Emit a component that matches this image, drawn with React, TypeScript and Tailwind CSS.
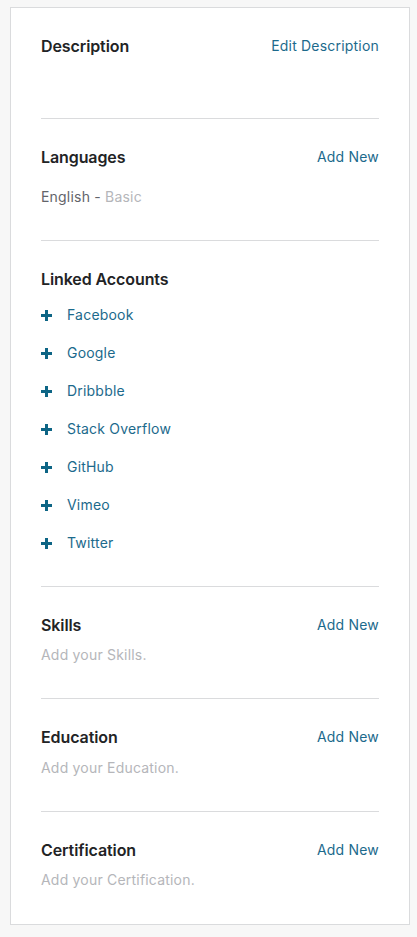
const font = { fontFamily: "Inter, 'Noto Sans', sans-serif" };

const accounts = ["Facebook", "Google", "Dribbble", "Stack Overflow", "GitHub", "Vimeo", "Twitter"];

function Header({ title, action }: { title: string; action: string }) {
  return (
    <div className="flex items-center justify-between h-[18px]">
      <h3 className="text-[16px] leading-[18px] font-semibold text-[#222325] tracking-[-0.1px]">{title}</h3>
      <a className="text-[14px] leading-[18px] text-[#1c6a8c] tracking-[0.2px]">{action}</a>
    </div>
  );
}

function Plus() {
  return (
    <svg width="11" height="11" viewBox="0 0 11 11" className="shrink-0">
      <rect x="4" y="0" width="3" height="11" fill="#0d6585" />
      <rect x="0" y="4" width="11" height="3" fill="#0d6585" />
    </svg>
  );
}

const extras = [
  { name: "Skills", cls: "pt-[29px] pb-[33px] border-b border-[#dadbdd]", text: "mt-[11px]" },
  { name: "Education", cls: "pt-[29px] pb-[33px] border-b border-[#dadbdd]", text: "mt-[12px]" },
  { name: "Certification", cls: "pt-[29px] pb-[34px]", text: "mt-[11px]" },
];

export default function App() {
  return (
    <div className="min-h-[937px] bg-[#f7f7f7] pt-[7px] px-[10px]" style={font}>
      <div className="bg-white border border-[#dadbdd] px-[30px] w-[400px]">
        <section className="pt-[29px] pb-[63px] border-b border-[#dadbdd]">
          <Header title="Description" action="Edit Description" />
        </section>

        <section className="pt-[29px] pb-[33px] border-b border-[#dadbdd]">
          <Header title="Languages" action="Add New" />
          <p className="mt-[21px] text-[14px] leading-[20px] text-[#62646a] tracking-[0.2px]">
            English - <span className="text-[#b5b6ba]">Basic</span>
          </p>
        </section>

        <section className="pt-[29px] pb-[33px] border-b border-[#dadbdd]">
          <h3 className="text-[16px] leading-[18px] font-semibold text-[#222325] tracking-[-0.1px]">Linked Accounts</h3>
          <ul className="mt-[17px] flex flex-col gap-[18px]">
            {accounts.map((a) => (
              <li key={a} className="flex items-center gap-[15px] h-[20px]">
                <Plus />
                <span className="text-[14px] leading-[20px] text-[#1c6a8c] tracking-[0.2px]">{a}</span>
              </li>
            ))}
          </ul>
        </section>

        {extras.map((s) => (
          <section key={s.name} className={s.cls}>
            <Header title={s.name} action="Add New" />
            <p className={`${s.text} text-[14px] leading-[20px] text-[#b5b6ba] tracking-[0.2px]`}>
              Add your {s.name}.
            </p>
          </section>
        ))}
      </div>
    </div>
  );
}
